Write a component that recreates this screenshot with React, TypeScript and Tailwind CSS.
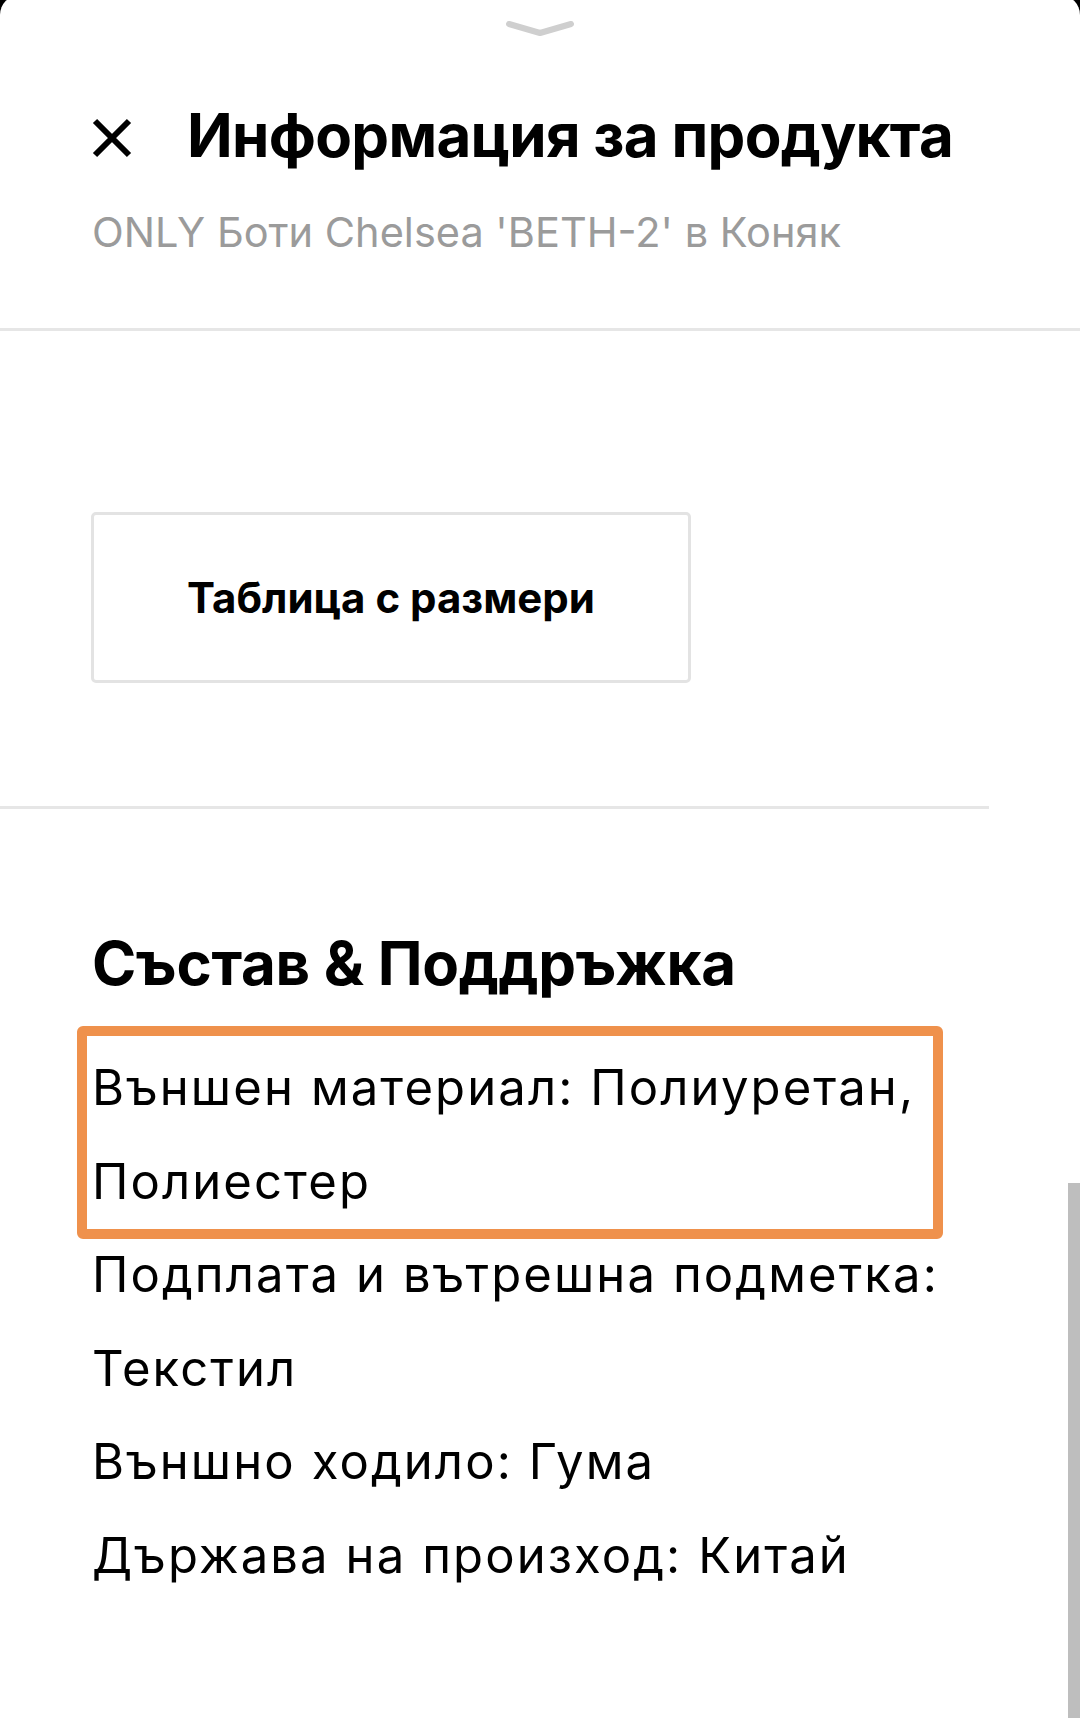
const materials = [
  "Подплата и вътрешна подметка: Текстил",
  "Външно ходило: Гума",
  "Държава на произход: Китай",
];

const App = () => {
  return (
    <div className="relative h-[1718px] overflow-hidden bg-black font-['Inter','Noto_Sans',sans-serif]">
      <div className="-mt-[5px] h-[1723px] rounded-t-[20px] bg-white">
        {/* HANDLE */}
        <div className="flex justify-center pt-[25px]">
          <svg width="70" height="18" viewBox="0 0 70 18" fill="none">
            <path
              d="M4 4 L35 13 L66 4"
              stroke="#cfcfcf"
              strokeWidth="6"
              strokeLinecap="round"
              strokeLinejoin="round"
            />
          </svg>
        </div>

        {/* HEADER */}
        <div className="border-b-[3px] border-[#e6e6e6] px-[92px] pt-[61px] pb-[71px]">
          <div className="flex items-center">
            <svg className="mt-[6px] shrink-0" width="40" height="40" viewBox="0 0 40 40">
              <path d="M3 3 L37 37 M37 3 L3 37" stroke="#000" strokeWidth="6" />
            </svg>
            <h1 className="ml-[55px] text-[60px] leading-[72px] font-bold tracking-[-0.7px] text-black">
              Информация за продукта
            </h1>
          </div>
          <p className="mt-[36px] text-[41.5px] leading-[50px] text-[#9b9b9b]">
            ONLY Боти Chelsea 'BETH-2' в Коняк
          </p>
        </div>

        {/* SIZE TABLE */}
        <div className="w-[989px] border-b-[3px] border-[#e6e6e6] pt-[181px] pb-[123px] pl-[91px]">
          <button className="flex h-[171px] w-[600px] items-center justify-center rounded-[5px] border-[3px] border-[#e3e3e3] text-[42px] font-bold text-black">
            Таблица с размери
          </button>
        </div>

        {/* COMPOSITION & CARE */}
        <div className="px-[92px] pt-[118px]">
          <h2 className="text-[60px] leading-[72px] font-bold tracking-[-0.3px] text-black">
            Състав & Поддръжка
          </h2>
          <div className="mt-[42px] w-[880px] text-[49px] leading-[93.5px] tracking-[2.1px] text-black">
            <div className="relative">
              <p>Външен материал: Полиуретан, Полиестер</p>
              <span className="pointer-events-none absolute -top-[15px] -bottom-[11px] -left-[15px] w-[866px] rounded-[6px] border-[10px] border-[#ef914c]" />
            </div>
            {materials.map((m) => (
              <p key={m}>{m}</p>
            ))}
          </div>
        </div>
      </div>

      {/* SCROLLBAR */}
      <div className="absolute top-[1183px] right-0 bottom-0 w-[12px] bg-[#bebebe]" />
    </div>
  );
};

export default App;
